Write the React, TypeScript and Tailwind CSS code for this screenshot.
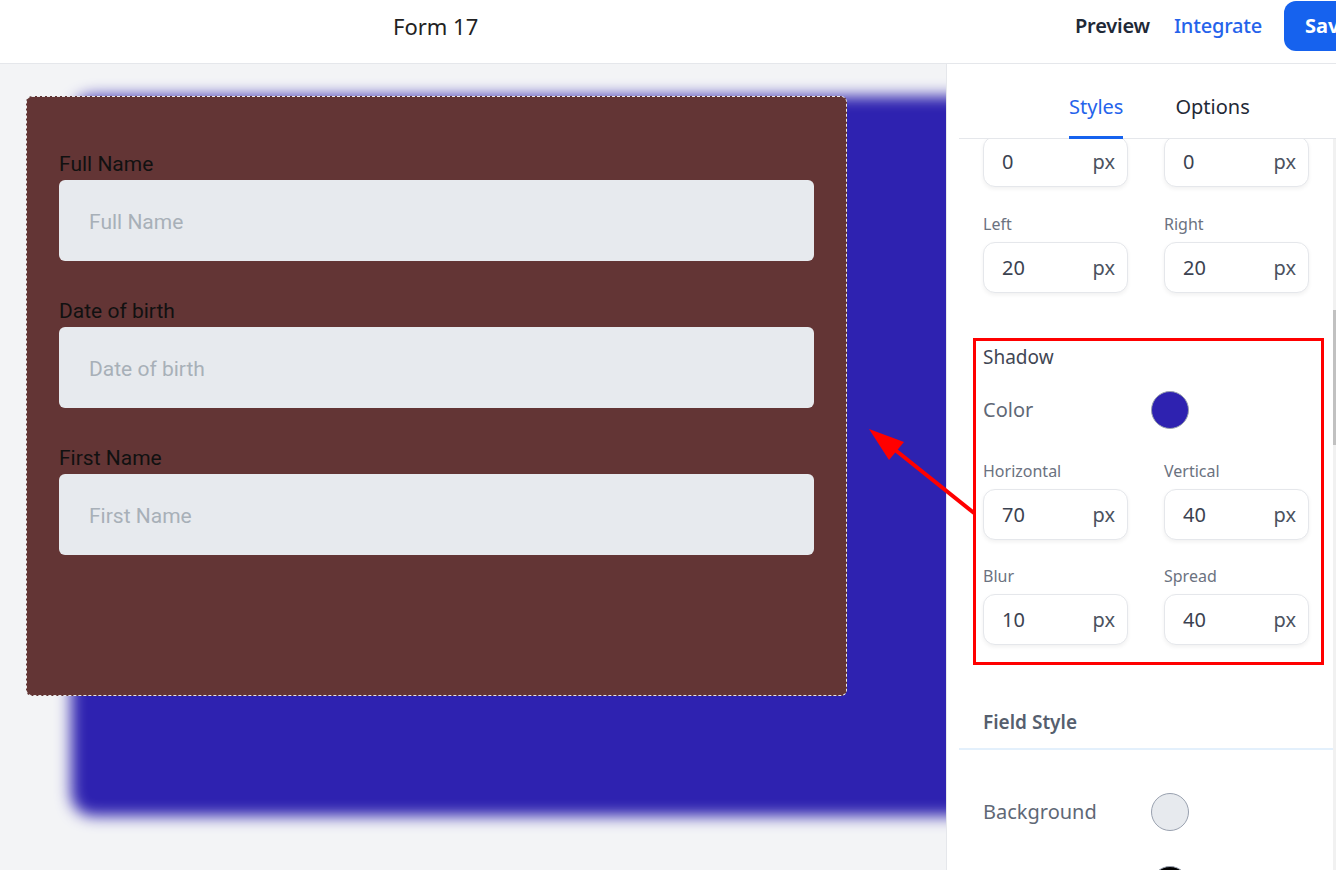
import React from 'react';

const fields = ['Full Name', 'Date of birth', 'First Name'];

function PxInput({ value }: { value: string }) {
  return (
    <div className="flex h-[51px] items-center justify-between rounded-xl border border-gray-200 bg-white pl-[18px] pr-[12px] shadow-[0_2px_4px_rgba(0,0,0,0.06)]">
      <span className="text-[20px] text-[#3b4250]">{value}</span>
      <span className="text-[20px] text-[#4b5260]">px</span>
    </div>
  );
}

function PxField({ label, value }: { label: string; value: string }) {
  return (
    <div className="flex flex-col">
      <span className="h-[22px] text-[16px] leading-[22px] text-[#6b7280]">{label}</span>
      <div className="mt-[7px]">
        <PxInput value={value} />
      </div>
    </div>
  );
}

function ColorRow({ label, color }: { label: string; color: string }) {
  return (
    <div className="flex h-[38px] items-center">
      <span className="w-[168px] text-[20px] text-[#5f6876]">{label}</span>
      <div className={`h-[38px] w-[38px] rounded-full border border-gray-400 ${color}`} />
    </div>
  );
}

export default function App() {
  return (
    <div className="relative h-[870px] w-[1336px] overflow-hidden bg-white" style={{ fontFamily: '"Noto Sans", sans-serif' }}>
      {/* Header */}
      <header className="h-[64px] border-b border-gray-200 bg-white">
        <div className="flex h-[52px] items-center">
          <div className="w-[1075px] shrink-0 pl-[393px] text-[22px] text-[#222]">Form 17</div>
          <div className="flex shrink-0 items-center">
            <span className="text-[20px] font-semibold tracking-[-0.2px] text-[#1f2937]">Preview</span>
            <span className="ml-6 text-[20px] font-medium tracking-[-0.2px] text-[#2563eb]">Integrate</span>
            <button className="ml-[22px] h-[50px] rounded-xl bg-[#1662ee] px-[21px] text-[20px] font-bold text-white">Save</button>
          </div>
        </div>
      </header>

      <div className="flex h-[806px]">
        {/* Canvas */}
        <main className="w-[946px] shrink-0 overflow-hidden bg-[#f3f4f6] pl-[26px] pt-[32px]">
          <div
            className="h-[600px] w-[821px] rounded-md border border-dashed border-[#e8e8e8] bg-[#633535] px-[32px] pt-[55px] shadow-[105px_60px_15px_60px_#2e22b0]"
            style={{ fontFamily: 'Roboto, sans-serif' }}
          >
            {fields.map((f) => (
              <div key={f} className="mb-[38px] flex flex-col">
                <label className="h-[25px] text-[21px] leading-[25px] text-[#111]">{f}</label>
                <div className="mt-[3px] flex h-[81px] items-center rounded-md bg-[#e7eaee] pl-[30px] pt-[5px] text-[21px] text-[#a8b0b8]">
                  {f}
                </div>
              </div>
            ))}
          </div>
        </main>

        {/* Sidebar */}
        <aside className="relative z-10 flex w-[390px] shrink-0 flex-col border-l border-gray-200 bg-white pl-[12px]">
          <div className="flex h-[75px] items-end border-b border-gray-200 pl-[110px]">
            <div className="-mb-px border-b-[3px] border-[#1662ee] pb-[15px] text-[20px] leading-[28px] text-[#2563eb]">Styles</div>
            <div className="-mb-px ml-[52px] border-b-[3px] border-transparent pb-[15px] text-[20px] leading-[28px] text-[#1f2937]">Options</div>
          </div>

          <div className="flex min-h-0 flex-1">
            <div className="flex-1 overflow-hidden">
              <div className="-mt-[3px] px-6">
                <div className="grid grid-cols-2 gap-x-[36px]">
                  <PxInput value="0" />
                  <PxInput value="0" />
                </div>
                <div className="mt-[26px] grid grid-cols-2 gap-x-[36px]">
                  <PxField label="Left" value="20" />
                  <PxField label="Right" value="20" />
                </div>

                {/* Shadow */}
                <div className="mt-[51px] h-[26px] text-[19px] leading-[26px] text-[#3f4654]">Shadow</div>
                <div className="mt-[21px]">
                  <ColorRow label="Color" color="bg-[#2e22b0]" />
                </div>
                <div className="mt-[31px] grid grid-cols-2 gap-x-[36px]">
                  <PxField label="Horizontal" value="70" />
                  <PxField label="Vertical" value="40" />
                </div>
                <div className="mt-[25px] grid grid-cols-2 gap-x-[36px]">
                  <PxField label="Blur" value="10" />
                  <PxField label="Spread" value="40" />
                </div>
              </div>

              {/* Field Style */}
              <div className="mt-[64px] border-b-2 border-[#e3f0fc] px-6 pb-[13px]">
                <div className="h-[26px] text-[19px] font-semibold leading-[26px] text-[#565f6e]">Field Style</div>
              </div>
              <div className="px-6 pt-[43px]">
                <ColorRow label="Background" color="bg-[#e7eaee]" />
                <div className="mt-[35px]">
                  <ColorRow label="" color="bg-black" />
                </div>
              </div>
            </div>
            <div className="w-[3px] bg-[#f1f1f1] pt-[171px]">
              <div className="h-[135px] bg-[#c1c1c1]" />
            </div>
          </div>
        </aside>
      </div>

      {/* Annotation: highlight box */}
      <div className="pointer-events-none absolute left-[973px] top-[338px] z-20 h-[327px] w-[351px] border-[3px] border-[#ff0000]" />

      {/* Annotation: arrow */}
      <svg className="pointer-events-none absolute left-[860px] top-[420px] z-20" width="120" height="100" viewBox="0 0 120 100">
        <line x1="34" y1="29" x2="114" y2="93" stroke="#ff0000" strokeWidth="4" />
        <polygon points="9,9 44,22 29,40" fill="#ff0000" />
      </svg>
    </div>
  );
}
